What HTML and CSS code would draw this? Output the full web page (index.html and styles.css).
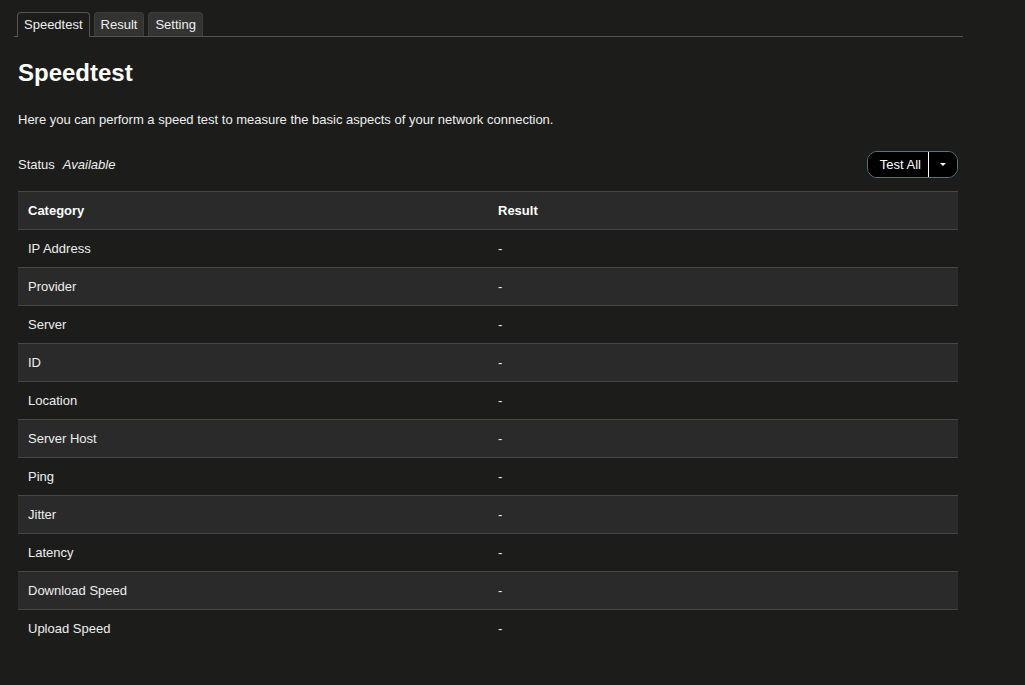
FILE: index.html
```html
<!DOCTYPE html>
<html>
<head>
<meta charset="utf-8">
<link rel="stylesheet" href="styles.css">
</head>
<body>
<div class="page">
  <ul class="tabs">
    <li class="tab active">Speedtest</li>
    <li class="tab">Result</li>
    <li class="tab">Setting</li>
  </ul>
  <div class="content">
    <h2 class="title">Speedtest</h2>
    <p class="desc">Here you can perform a speed test to measure the basic aspects of your network connection.</p>
    <div class="status-row">
      <div class="status"><span class="status-label">Status</span><em class="status-value">Available</em></div>
      <div class="btn-group">
        <button class="btn-main">Test All</button>
        <button class="btn-caret"><span class="caret"></span></button>
      </div>
    </div>
    <table class="table">
      <thead>
        <tr><th>Category</th><th>Result</th></tr>
      </thead>
      <tbody>
        <tr><td>IP Address</td><td>-</td></tr>
        <tr><td>Provider</td><td>-</td></tr>
        <tr><td>Server</td><td>-</td></tr>
        <tr><td>ID</td><td>-</td></tr>
        <tr><td>Location</td><td>-</td></tr>
        <tr><td>Server Host</td><td>-</td></tr>
        <tr><td>Ping</td><td>-</td></tr>
        <tr><td>Jitter</td><td>-</td></tr>
        <tr><td>Latency</td><td>-</td></tr>
        <tr><td>Download Speed</td><td>-</td></tr>
        <tr><td>Upload Speed</td><td>-</td></tr>
      </tbody>
    </table>
  </div>
</div>
</body>
</html>
```
FILE: styles.css
```css
html, body {
  margin: 0;
  padding: 0;
  background: #1c1d1b;
  color: #eeeeee;
  font-family: "Liberation Sans", Arial, sans-serif;
  font-size: 13px;
}
.page {
  width: 949px;
  padding: 12px 0 0 14px;
}
.tabs {
  list-style: none;
  margin: 0;
  padding: 0 0 0 3px;
  display: flex;
  gap: 4px;
  border-bottom: 1px solid #555653;
  height: 24px;
}
.tab {
  height: 23px;
  line-height: 24px;
  padding: 0 6px;
  background: #333432;
  border: 1px solid #3d3e3b;
  border-bottom: none;
  border-radius: 4px 4px 0 0;
  color: #eeeeee;
  font-size: 13px;
}
.tab.active {
  background: #1c1d1b;
  border-color: #555653;
  height: 24px;
}
.content {
  padding: 0 5px 0 4px;
}
.title {
  font-size: 24px;
  font-weight: bold;
  margin: 22px 0 0 0;
  line-height: 28px;
  color: #ffffff;
}
.desc {
  margin: 24px 0 0 0;
  line-height: 18px;
}
.status-row {
  display: flex;
  justify-content: space-between;
  align-items: center;
  margin-top: 22px;
}
.status-label {
  margin-right: 8px;
}
.status-value {
  font-style: italic;
}
.btn-group {
  display: flex;
  height: 27px;
  border: 1px solid #56757c;
  border-radius: 10px;
  background: #000000;
  overflow: hidden;
  box-sizing: border-box;
}
.btn-main, .btn-caret {
  background: #000000;
  color: #ffffff;
  border: none;
  font-family: inherit;
  font-size: 13px;
  padding: 0;
  margin: 0;
}
.btn-main {
  width: 61px;
  text-align: right;
  padding-right: 7px;
  box-sizing: border-box;
  border-right: 1px solid #ffffff;
}
.btn-caret {
  width: 28px;
  display: flex;
  align-items: center;
  justify-content: center;
}
.caret {
  width: 0;
  height: 0;
  border-left: 3px solid transparent;
  border-right: 3px solid transparent;
  border-top: 3px solid #ffffff;
}
.table {
  width: 940px;
  margin-top: 13px;
  border-collapse: collapse;
  table-layout: fixed;
}
.table th, .table td {
  width: 50%;
  height: 37px;
  padding: 0 10px;
  text-align: left;
  border-top: 1px solid #464745;
  color: #eeeeee;
}
.table th {
  font-weight: bold;
  background: #2a2a2a;
  color: #ffffff;
}
.table tbody tr:nth-child(even) td {
  background: #2a2a2a;
}
```
